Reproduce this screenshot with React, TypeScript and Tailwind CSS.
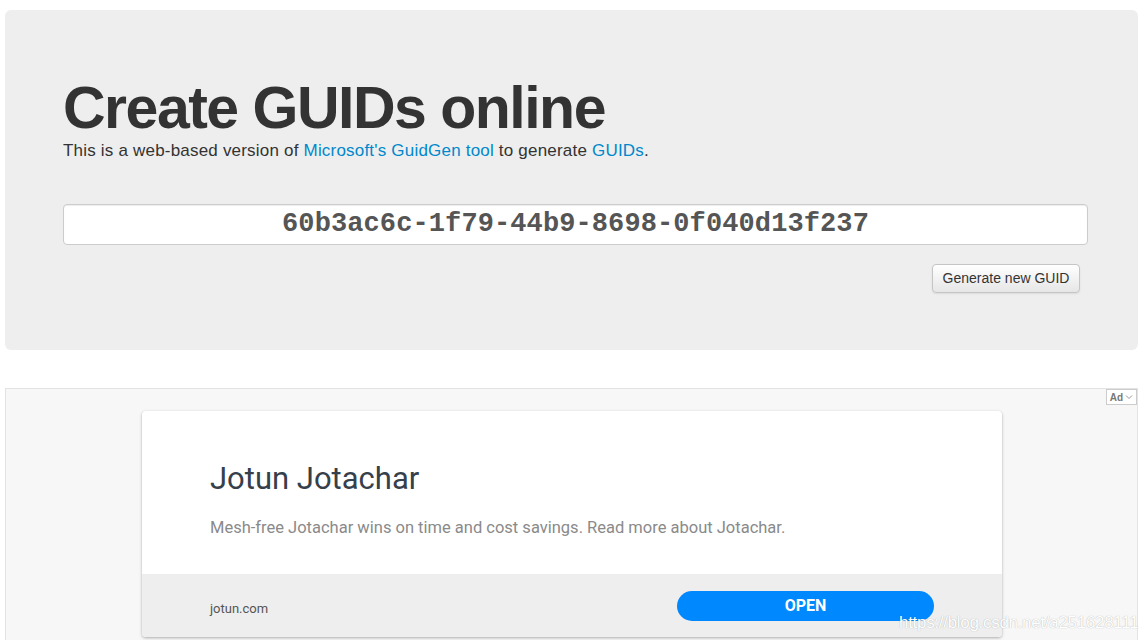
import React from "react";

export default function App() {
  return (
    <div className="relative w-[1142px] h-[640px] overflow-hidden bg-white" style={{ fontFamily: "Arial, 'Liberation Sans', sans-serif" }}>
      <div className="pt-[10px] pl-[5px] pr-[4px]">
        <div className="h-[340px] rounded-[6px] bg-[#eeeeee] pl-[58px] pr-[50px] pt-[68px]">
          <h1 className="text-[59px] leading-[60px] font-bold text-[#333333] tracking-[-1.5px] font-['Liberation_Sans',Arial,sans-serif]">
            Create GUIDs online
          </h1>
          <p className="text-[17px] leading-[24px] text-[#333333] mt-px tracking-[0.2px]">
            This is a web-based version of <span className="text-[#0088cc]">Microsoft's GuidGen tool</span> to generate{" "}
            <span className="text-[#0088cc]">GUIDs</span>.
          </p>
          <div className="mt-[41px] h-[41px] w-full rounded-[4px] border border-[#cccccc] bg-white flex items-center justify-center shadow-[inset_0_1px_1px_rgba(0,0,0,0.075)]">
            <span className="text-[27px] font-bold text-[#555555] font-['Liberation_Mono','Courier_New',monospace] tracking-[0.1px]">
              60b3ac6c-1f79-44b9-8698-0f040d13f237
            </span>
          </div>
          <div className="flex justify-end pr-[8px] mt-[19px]">
            <button className="h-[29px] w-[148px] rounded-[4px] border border-[#c5c5c5] bg-gradient-to-b from-white to-[#e6e6e6] text-[14px] text-[#333333] shadow-[0_1px_2px_rgba(0,0,0,0.08)]">
              Generate new GUID
            </button>
          </div>
        </div>
      </div>

      <div className="relative ml-[5px] mr-[4px] mt-[38px] h-[300px] border border-[#e3e3e3] bg-[#f7f7f7]">
        <div className="absolute right-0 top-0 flex h-[16px] items-center gap-[2px] border border-[#cccccc] bg-white px-[3px] text-[10px] font-bold text-[#777777]">
          <span>Ad</span>
          <svg width="8" height="6" viewBox="0 0 8 6" fill="none">
            <path d="M1 1.5 L4 4.5 L7 1.5" stroke="#999" strokeWidth="1" />
          </svg>
        </div>
        <div className="ml-[136px] mt-[22px] w-[860px] overflow-hidden rounded-[4px] bg-white shadow-[0_1px_3px_rgba(0,0,0,0.3)]" style={{ fontFamily: "Roboto, 'Noto Sans', sans-serif" }}>
          <div className="h-[163px] px-[68px] pt-[50px]">
            <div className="text-[31px] leading-[36px] text-[#36404a]">Jotun Jotachar</div>
            <div className="mt-[20px] text-[16.5px] leading-[22px] text-[#8a8a8a]">
              Mesh-free Jotachar wins on time and cost savings. Read more about Jotachar.
            </div>
          </div>
          <div className="flex h-[63px] items-center justify-between bg-[#eeeeee] px-[68px]">
            <span className="text-[13px] text-[#555555] mt-[6px]">jotun.com</span>
            <button className="h-[30px] w-[257px] rounded-full bg-[#0088ff] text-[16px] font-bold text-white">OPEN</button>
          </div>
        </div>
      </div>

      <div className="absolute left-[899px] top-[610px] text-[17px] text-white [text-shadow:0_0_1px_rgba(0,0,0,0.35)] tracking-[-0.3px]">
        https://blog.csdn.net/a251628111
      </div>
    </div>
  );
}
